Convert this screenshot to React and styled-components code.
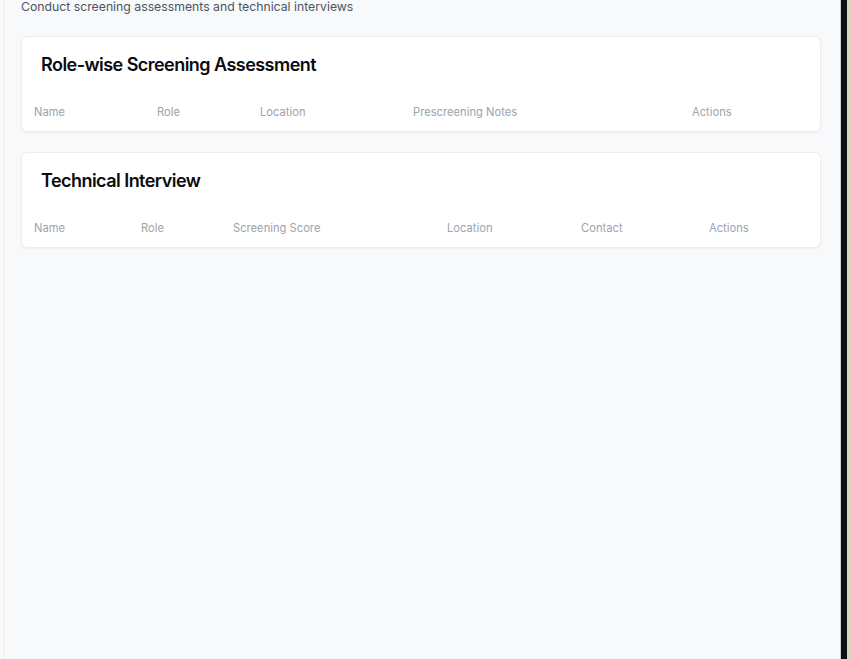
import React from "react";
import styled, { createGlobalStyle } from "styled-components";

const GlobalStyle = createGlobalStyle`
  html, body, #root {
    margin: 0;
    height: 100%;
  }
  body {
    font-family: Inter, "Noto Sans", sans-serif;
    color: #111827;
    -webkit-font-smoothing: antialiased;
  }
  * {
    box-sizing: border-box;
  }
`;

const screening = {
  title: "Role-wise Screening Assessment",
  columns: [
    { label: "Name", width: 123 },
    { label: "Role", width: 103 },
    { label: "Location", width: 153 },
    { label: "Prescreening Notes", width: 279 },
    { label: "Actions", width: 140 },
  ],
};

const interview = {
  title: "Technical Interview",
  columns: [
    { label: "Name", width: 107 },
    { label: "Role", width: 92 },
    { label: "Screening Score", width: 214 },
    { label: "Location", width: 134 },
    { label: "Contact", width: 128 },
    { label: "Actions", width: 123 },
  ],
};

function SectionCard({ section }) {
  return (
    <Card>
      <CardTitle>{section.title}</CardTitle>
      <Table>
        <colgroup>
          {section.columns.map((col) => (
            <col key={col.label} style={{ width: col.width }} />
          ))}
        </colgroup>
        <thead>
          <tr>
            {section.columns.map((col) => (
              <HeadCell key={col.label}>{col.label}</HeadCell>
            ))}
          </tr>
        </thead>
        <tbody />
      </Table>
    </Card>
  );
}

export default function App() {
  return (
    <>
      <GlobalStyle />
      <Shell>
        <SidebarEdge />
        <Main>
          <Subtitle>Conduct screening assessments and technical interviews</Subtitle>
          <Stack>
            <SectionCard section={screening} />
            <SectionCard section={interview} />
          </Stack>
        </Main>
        <WindowEdge />
        <DeskEdge />
      </Shell>
    </>
  );
}

const Shell = styled.div`
  display: flex;
  height: 100vh;
  overflow: hidden;
`;

const SidebarEdge = styled.div`
  width: 4px;
  flex-shrink: 0;
  background: #fbfbfc;
  border-right: 1px solid #eef0f3;
`;

const Main = styled.main`
  flex: 1;
  background: #f8f9fb;
  padding: 0 19px 0 17px;
  border-right: 1px solid #cfd1d6;
`;

const Subtitle = styled.p`
  margin: 0;
  font-size: 12.25px;
  line-height: 14px;
  color: #4b5563;
`;

const Stack = styled.div`
  display: flex;
  flex-direction: column;
  gap: 20px;
  margin-top: 22px;
`;

const Card = styled.section`
  background: #ffffff;
  border: 1px solid #eceef1;
  border-radius: 6px;
  box-shadow: 0 1px 2px rgba(16, 24, 40, 0.05);
  overflow: hidden;
`;

const CardTitle = styled.h2`
  margin: 0;
  padding: 14px 19px;
  font-size: 18px;
  line-height: 28px;
  font-weight: 600;
  letter-spacing: -0.03em;
  color: #0b0b0f;
`;

const Table = styled.table`
  width: 100%;
  border-collapse: collapse;
  table-layout: fixed;
`;

const HeadCell = styled.th`
  height: 38px;
  padding: 0 12px;
  line-height: 16px;
  text-align: left;
  font-size: 11.2px;
  font-weight: 400;
  color: #9ca3af;
  white-space: nowrap;
`;

const WindowEdge = styled.div`
  width: 6px;
  flex-shrink: 0;
  background: #0f1016;
`;

const DeskEdge = styled.div`
  width: 5px;
  flex-shrink: 0;
  background: #dcd5c0;
`;
